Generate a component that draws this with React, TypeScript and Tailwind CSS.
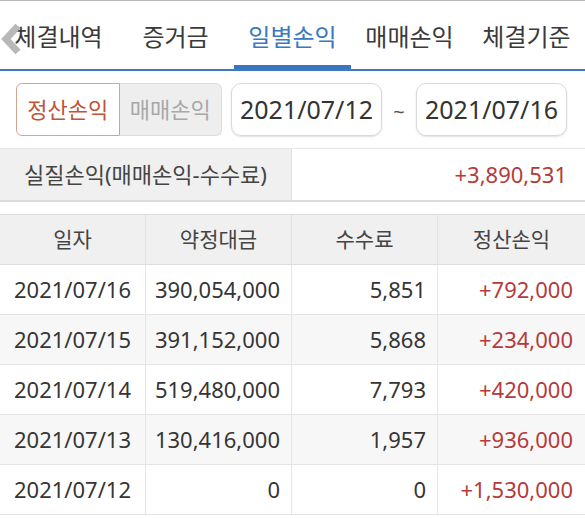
import React from "react";

const rows = [
  { d: "2021/07/16", a: "390,054,000", f: "5,851", p: "+792,000" },
  { d: "2021/07/15", a: "391,152,000", f: "5,868", p: "+234,000" },
  { d: "2021/07/14", a: "519,480,000", f: "7,793", p: "+420,000" },
  { d: "2021/07/13", a: "130,416,000", f: "1,957", p: "+936,000" },
  { d: "2021/07/12", a: "0", f: "0", p: "+1,530,000" },
];

const tabs = ["체결내역", "증거금", "일별손익", "매매손익", "체결기준"];

export default function App() {
  return (
    <div
      className="w-[585px] h-[518px] bg-white overflow-hidden border-t border-[#b9b9b9] text-[#353535]"
      style={{ fontFamily: '"Noto Sans", "Noto Sans CJK KR", sans-serif' }}
    >
      {/* Tabs */}
      <div className="relative grid grid-cols-5 h-[68px]">
        <svg
          className="absolute left-0 top-[22px]"
          width="22"
          height="32"
          viewBox="0 0 22 32"
        >
          <path
            d="M18 3 L6 16 L18 29"
            fill="none"
            stroke="#b8b8b8"
            strokeWidth="7"
            strokeLinejoin="miter"
          />
        </svg>
        {tabs.map((t, i) => (
          <div
            key={t}
            className={
              i === 2
                ? "flex items-center justify-center text-[24px] text-[#3a78c2] border-b-[4px] border-[#3a76bf] pt-[8px]"
                : "flex items-center justify-center text-[24px] text-[#3a3a3a] pt-[4px]"
            }
          >
            {t}
          </div>
        ))}
      </div>
      <div className="h-[2px] bg-[#3f79bd]" />

      {/* Filter row */}
      <div className="flex items-center h-[78px] pl-[16px] border-b border-[#e6e6e6]">
        <div className="flex w-[206px] h-[53px]">
          <div className="flex-1 flex items-center justify-center bg-white border border-[#d7a58e] rounded-l-[6px] text-[22px] text-[#c0533a]">
            정산손익
          </div>
          <div className="flex-1 flex items-center justify-center bg-[#eeeeee] border border-l-0 border-[#dddddd] rounded-r-[6px] text-[22px] text-[#a8a8a8]">
            매매손익
          </div>
        </div>
        <div className="ml-[9px] w-[151px] h-[53px] flex items-center justify-center border border-[#d9d9d9] rounded-[10px] shadow-[0_1px_2px_rgba(0,0,0,0.12)] text-[25px] text-[#333]">
          2021/07/12
        </div>
        <div className="w-[34px] text-center text-[20px] text-[#555] pt-[4px]">~</div>
        <div className="w-[151px] h-[53px] flex items-center justify-center border border-[#d9d9d9] rounded-[10px] shadow-[0_1px_2px_rgba(0,0,0,0.12)] text-[25px] text-[#333]">
          2021/07/16
        </div>
      </div>

      {/* Summary */}
      <div className="grid grid-cols-[292px_1fr] h-[53px] border-b-2 border-[#dcdcdc]">
        <div className="flex items-center justify-center bg-[#f0f0f0] border-r border-[#e2e2e2] text-[22px] text-[#444]">
          실질손익(매매손익-수수료)
        </div>
        <div className="flex items-center justify-end pr-[18px] text-[22px] text-[#b53a3a]">
          +3,890,531
        </div>
      </div>

      {/* Table */}
      <div className="mt-[12px]">
        <div className="grid grid-cols-[146px_146px_146px_147px] h-[51px] bg-[#f0f0f0] border-t border-b border-[#dedede] text-[21px] text-[#444]">
          <div className="flex items-center justify-center border-r border-[#e2e2e2]">일자</div>
          <div className="flex items-center justify-center border-r border-[#e2e2e2]">약정대금</div>
          <div className="flex items-center justify-center border-r border-[#e2e2e2]">수수료</div>
          <div className="flex items-center justify-center">정산손익</div>
        </div>
        {rows.map((r, i) => (
          <div
            key={r.d}
            className={
              "grid grid-cols-[146px_146px_146px_147px] h-[50px] border-b border-[#e4e4e4] text-[22px] " +
              (i % 2 === 1 ? "bg-[#f7f7f7]" : "bg-white")
            }
          >
            <div className="flex items-center justify-center border-r border-[#e6e6e6]">{r.d}</div>
            <div className="flex items-center justify-end pr-[11px] border-r border-[#e6e6e6]">{r.a}</div>
            <div className="flex items-center justify-end pr-[11px] border-r border-[#e6e6e6]">{r.f}</div>
            <div className="flex items-center justify-end pr-[12px] text-[#b53a3a]">{r.p}</div>
          </div>
        ))}
      </div>
    </div>
  );
}
